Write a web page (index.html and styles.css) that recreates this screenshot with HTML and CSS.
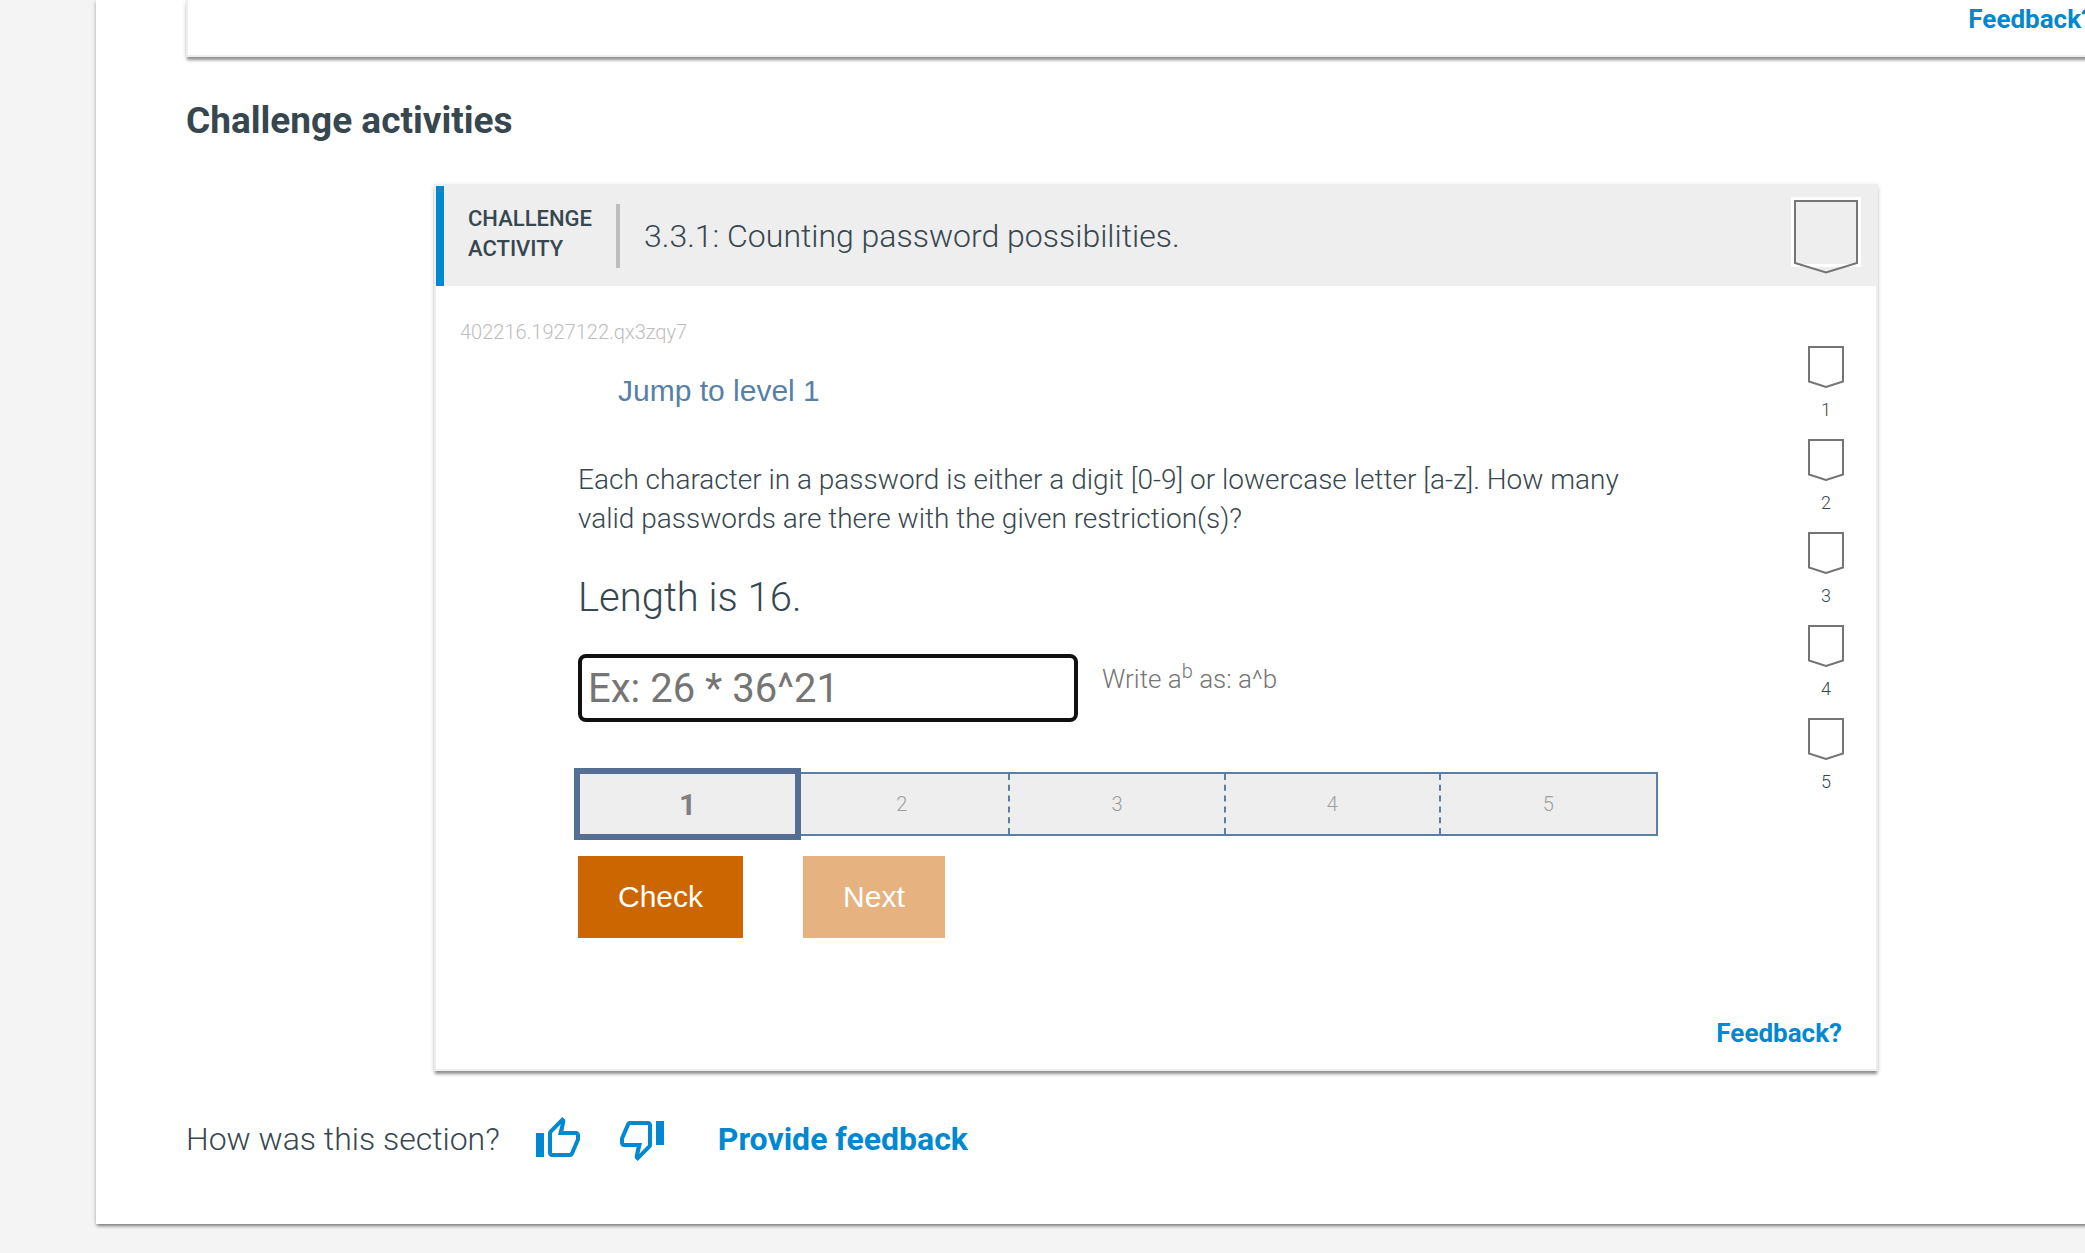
FILE: index.html
```html
<!DOCTYPE html>
<html lang="en">

<head>
    <meta charset="UTF-8">
    <meta name="viewport" content="width=device-width, initial-scale=1.0">
    <title>Challenge activities</title>
    <link rel="stylesheet" href="styles.css">
</head>

<body>
    <main class="page">
        <div class="card previous">
            <a href="#" class="feedback">Feedback?</a>
        </div>

        <h1>Challenge activities</h1>

        <section class="card activity">
            <header class="activity-header">
                <div class="activity-type">CHALLENGE ACTIVITY</div>
                <h2>3.3.1: Counting password possibilities.</h2>
                <svg class="chevron" width="70" height="78" viewBox="0 0 70 78">
                    <path d="M1.5 1.5H68.5V68.500H1.5Z" fill="none" stroke="#fff" stroke-width="3" />
                    <path d="M4 4H66V66L35 75.500L4 66Z" fill="none" stroke="#757575" stroke-width="2" />
                </svg>
            </header>

            <div class="activity-body">
                <p class="code">402216.1927122.qx3zqy7</p>

                <div class="content">
                    <button class="jump">Jump to level 1</button>
                    <p class="question">Each character in a password is either a digit [0-9] or lowercase letter [a-z]. How many valid passwords are there with the given restriction(s)?</p>
                    <p class="restriction">Length is 16.</p>

                    <div class="answer">
                        <input type="text" id="answer" placeholder="Ex: 26 * 36^21" aria-label="Answer">
                        <label for="answer">Write a<sup>b</sup> as: a^b</label>
                    </div>

                    <div class="progress">
                        <div class="step current">1</div>
                        <div class="step">2</div>
                        <div class="step">3</div>
                        <div class="step">4</div>
                        <div class="step">5</div>
                    </div>

                    <div class="buttons">
                        <button class="check">Check</button>
                        <button class="next" disabled>Next</button>
                    </div>
                </div>

                <ol class="levels">
                    <li><svg width="36" height="42" viewBox="0 0 36 42"><path d="M1 1H35V35.500L18 41L1 35.500Z" /></svg>1</li>
                    <li><svg width="36" height="42" viewBox="0 0 36 42"><path d="M1 1H35V35.500L18 41L1 35.500Z" /></svg>2</li>
                    <li><svg width="36" height="42" viewBox="0 0 36 42"><path d="M1 1H35V35.500L18 41L1 35.500Z" /></svg>3</li>
                    <li><svg width="36" height="42" viewBox="0 0 36 42"><path d="M1 1H35V35.500L18 41L1 35.500Z" /></svg>4</li>
                    <li><svg width="36" height="42" viewBox="0 0 36 42"><path d="M1 1H35V35.500L18 41L1 35.500Z" /></svg>5</li>
                </ol>
            </div>

            <a href="#" class="feedback">Feedback?</a>
        </section>

        <footer class="rating">
            <span>How was this section?</span>
            <button aria-label="Thumbs up">
                <svg width="48" height="48" viewBox="0 0 24 24">
                    <path d="M9 21h9c.83 0 1.540-.5 1.840-1.220l3.020-7.050c.09-.23.14-.47.14-.73v-2c0-1.100-.9-2-2-2h-6.310l.95-4.570.03-.32c0-.41-.17-.79-.44-1.060L14.170 1 7.580 7.590C7.220 7.950 7 8.450 7 9v10c0 1.100.9 2 2 2zM9 9l4.340-4.340L12 10h9v2l-3 7H9V9zM1 9h4v12H1z" />
                </svg>
            </button>
            <button aria-label="Thumbs down">
                <svg width="48" height="48" viewBox="0 0 24 24">
                    <path d="M15 3H6c-.83 0-1.540.5-1.840 1.220l-3.020 7.050c-.09.23-.14.47-.14.73v2c0 1.100.9 2 2 2h6.310l-.95 4.570-.03.32c0 .41.17.79.44 1.060L9.830 23l6.590-6.590c.36-.36.58-.86.58-1.410V5c0-1.100-.9-2-2-2zm0 12l-4.340 4.340L12 14H3v-2l3-7h9v10zm4-12h4v12h-4z" />
                </svg>
            </button>
            <a href="#">Provide feedback</a>
        </footer>
    </main>
</body>

</html>
```
FILE: styles.css
```css
* {
    box-sizing: border-box;
}

body {
    margin: 0;
    padding: 0 0 30px 96px;
    font-family: Roboto, sans-serif;
    font-weight: 300;
    color: #37474f;
    background-color: #f4f4f4;
    overflow-x: hidden;
}

h1, h2, p, ol {
    margin: 0;
    padding: 0;
}

button {
    border: none;
    font-family: "Liberation Sans", Arial, sans-serif;
    font-size: 30px;
    cursor: pointer;
}

a {
    color: #0288d1;
    font-weight: 700;
    text-decoration: none;
}

a:hover {
    text-decoration: underline;
}

.page {
    padding: 0 0 61px 90px;
    margin-right: -45px;
    background-color: #fff;
    box-shadow: 0 1px 5px rgba(0, 0, 0, 0.2), 0 3px 3px -1px rgba(0, 0, 0, 0.4);
}

.card {
    display: flex;
    flex-direction: column;
    border: 2px solid #eee;
    background-color: #fff;
    box-shadow: 0 1px 5px rgba(0, 0, 0, 0.12), 0 4px 3px -1px rgba(0, 0, 0, 0.4);
}

.previous {
    border-top: none;
}

.feedback {
    align-self: flex-end;
    padding: 0 34px 17px 0;
    font-size: 26px;
    line-height: 38px;
}

h1 {
    padding: 41px 0 40px;
    font-size: 37px;
    line-height: 46px;
}

.activity {
    width: 1444px;
    margin-left: 248px;
}

.activity-header {
    display: flex;
    align-items: center;
    height: 100px;
    padding: 0 15px 0 24px;
    border-left: 8px solid #0288d1;
    background-color: #eee;
}

.activity-type {
    width: 152px;
    padding-bottom: 4px;
    border-right: 4px solid #bdbdbd;
    font-size: 22px;
    font-weight: 500;
    line-height: 30px;
}

h2 {
    flex: 1;
    padding-left: 24px;
    font-size: 32px;
    font-weight: 300;
}

.activity-body {
    display: grid;
    grid-template-columns: 1fr 66px;
    padding: 32px 17px 0 24px;
}

.code {
    grid-column: 1 / 3;
    font-size: 20px;
    line-height: 28px;
    color: #bdbdbd;
}

.content {
    padding: 4px 135px 0 118px;
}

.jump {
    height: 82px;
    padding: 0 40px;
    background: none;
    color: #5780a6;
}

.question {
    padding-top: 28px;
    font-size: 28px;
    line-height: 39px;
}

.restriction {
    padding: 32px 0 28px;
    font-size: 40px;
    line-height: 56px;
}

.answer {
    display: flex;
    gap: 24px;
}

.answer input {
    width: 500px;
    height: 68px;
    padding: 0 6px;
    border: 4px solid #101010;
    border-radius: 8px;
    font-family: Roboto, sans-serif;
    font-size: 40px;
    color: #37474f;
    outline: none;
}

.answer input::placeholder {
    color: #757575;
}

.answer label {
    font-size: 26px;
    line-height: 50px;
    color: #757575;
}

.answer sup {
    font-size: 20px;
    line-height: 0;
}

.progress {
    display: grid;
    grid-template-columns: repeat(5, 1fr);
    height: 64px;
    margin-top: 50px;
    border: 2px solid #5b7fa3;
    background-color: #eee;
}

.step {
    display: flex;
    align-items: center;
    justify-content: center;
    border-right: 2px dashed #5b7fa3;
    font-size: 20px;
    color: #9e9e9e;
}

.step:last-child {
    border-right: none;
}

.current {
    margin: -6px;
    border: 6px solid #546e94;
    font-size: 30px;
    font-weight: 700;
    color: #808080;
}

.buttons {
    display: flex;
    gap: 60px;
    padding: 20px 0 76px;
}

.buttons button {
    height: 82px;
    padding: 0 40px;
    background-color: #cc6600;
    color: #fff;
}

.buttons .next {
    background-color: #e5b280;
}

.levels {
    display: flex;
    flex-direction: column;
    list-style: none;
}

.levels li {
    display: flex;
    flex-direction: column;
    align-items: center;
    gap: 8px;
    height: 93px;
    font-size: 18px;
    line-height: 28px;
}

.levels path {
    fill: none;
    stroke: #757575;
    stroke-width: 2;
}

.rating {
    display: flex;
    align-items: center;
    padding-top: 44px;
    font-size: 32px;
}

.rating button {
    display: flex;
    margin-left: 34px;
    padding: 0;
    background: none;
}

.rating button + button {
    margin-left: 36px;
}

.rating path {
    fill: #0288d1;
}

.rating a {
    margin-left: 52px;
}
```
